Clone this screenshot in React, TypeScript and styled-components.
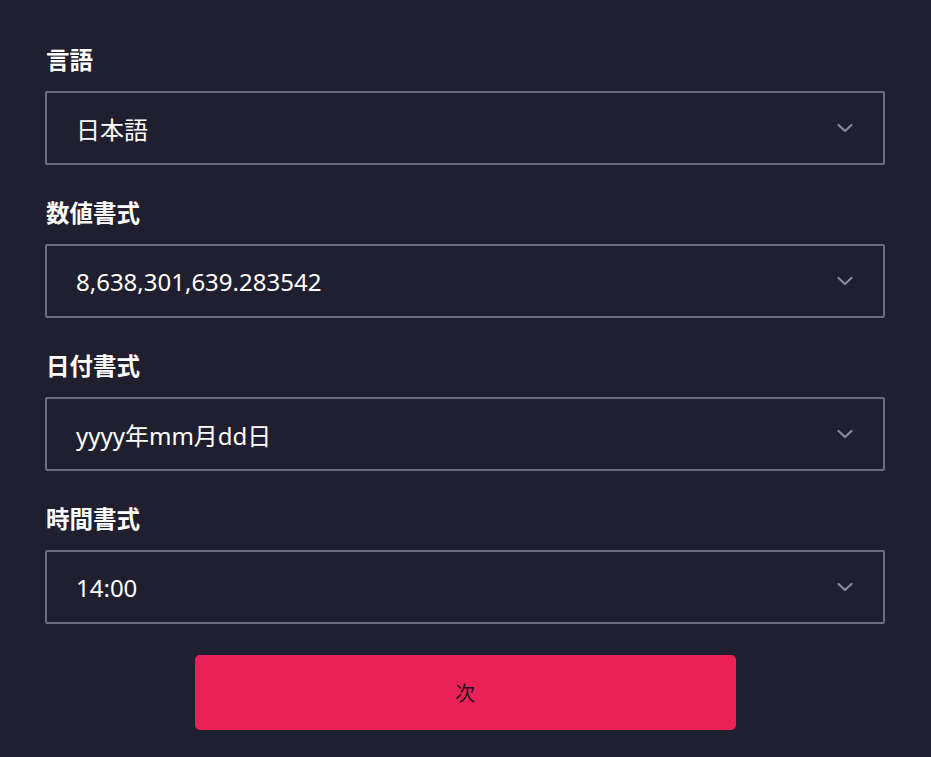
import React from 'react'
import styled, { createGlobalStyle } from 'styled-components';

const GlobalStyle = createGlobalStyle`
  html, body {
    margin: 0;
    padding: 0;
    background: #1f1f30;
  }
  body {
    font-family: "Noto Sans", "Noto Sans CJK JP", sans-serif;
    color: #ffffff;
  }
`;

const Page = styled.div`
  min-height: 757px;
  box-sizing: border-box;
  padding: 45px 46px 0 45px;
  display: flex;
  flex-direction: column;
`;

const Field = styled.div`
  display: flex;
  flex-direction: column;
  margin-bottom: 33px;
  &:last-of-type {
    margin-bottom: 31px;
  }
`;

const Label = styled.label`
  font-size: 23.5px;
  font-weight: 700;
  line-height: 30px;
  margin-bottom: 16px;
  padding-left: 1px;
`;

const SelectBox = styled.div`
  height: 74px;
  box-sizing: border-box;
  border: 2px solid #6c6c7e;
  border-radius: 2px;
  display: flex;
  align-items: center;
  justify-content: space-between;
  padding: 0 29px 0 29px;
  font-size: 24px;
`;

const Chevron = styled.svg`
  width: 18px;
  height: 10px;
  color: #8a8a9a;
`;

const NextButton = styled.button`
  align-self: center;
  width: 541px;
  height: 75px;
  border: none;
  border-radius: 5px;
  background: #ea2157;
  color: #250d1a;
  font-family: "Noto Sans", "Noto Sans CJK JP", sans-serif;
  font-size: 20px;
`;

const FIELDS = [
  { label: '言語', value: '日本語' },
  { label: '数値書式', value: '8,638,301,639.283542' },
  { label: '日付書式', value: 'yyyy年mm月dd日' },
  { label: '時間書式', value: '14:00' },
];

const App = () => (
  <>
    <GlobalStyle />
    <Page>
      {FIELDS.map(f => (
        <Field key={f.label}>
          <Label>{f.label}</Label>
          <SelectBox>
            <span>{f.value}</span>
            <Chevron viewBox="0 0 18 10" fill="none">
              <path d="M2.5 2l6.5 6 6.5-6" stroke="currentColor" strokeWidth="2.2" strokeLinecap="round" strokeLinejoin="round" />
            </Chevron>
          </SelectBox>
        </Field>
      ))}
      <NextButton>次</NextButton>
    </Page>
  </>
);

export default App
